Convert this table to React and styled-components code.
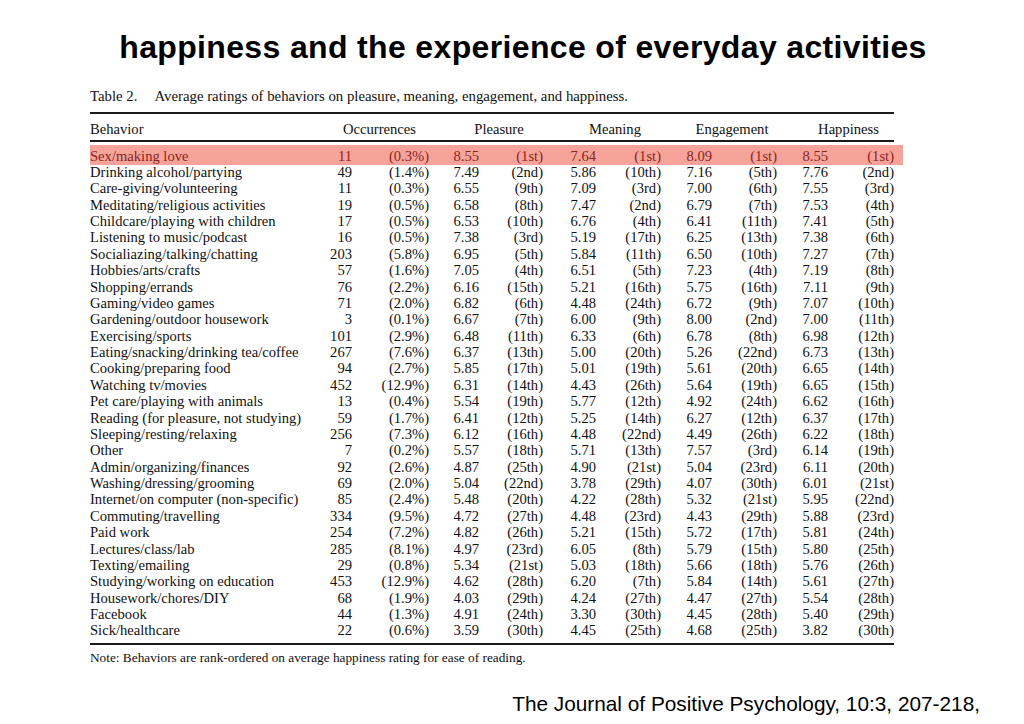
import React from 'react'
import styled, { createGlobalStyle } from 'styled-components'

const GlobalStyle = createGlobalStyle`
  html, body {
    margin: 0;
    padding: 0;
    background: #fff;
  }
  body {
    width: 1024px;
    height: 724px;
    overflow: hidden;
  }
`;

const rows = [
  ['Sex/making love', '11', '(0.3%)', '8.55', '(1st)', '7.64', '(1st)', '8.09', '(1st)', '8.55', '(1st)'],
  ['Drinking alcohol/partying', '49', '(1.4%)', '7.49', '(2nd)', '5.86', '(10th)', '7.16', '(5th)', '7.76', '(2nd)'],
  ['Care-giving/volunteering', '11', '(0.3%)', '6.55', '(9th)', '7.09', '(3rd)', '7.00', '(6th)', '7.55', '(3rd)'],
  ['Meditating/religious activities', '19', '(0.5%)', '6.58', '(8th)', '7.47', '(2nd)', '6.79', '(7th)', '7.53', '(4th)'],
  ['Childcare/playing with children', '17', '(0.5%)', '6.53', '(10th)', '6.76', '(4th)', '6.41', '(11th)', '7.41', '(5th)'],
  ['Listening to music/podcast', '16', '(0.5%)', '7.38', '(3rd)', '5.19', '(17th)', '6.25', '(13th)', '7.38', '(6th)'],
  ['Socialiazing/talking/chatting', '203', '(5.8%)', '6.95', '(5th)', '5.84', '(11th)', '6.50', '(10th)', '7.27', '(7th)'],
  ['Hobbies/arts/crafts', '57', '(1.6%)', '7.05', '(4th)', '6.51', '(5th)', '7.23', '(4th)', '7.19', '(8th)'],
  ['Shopping/errands', '76', '(2.2%)', '6.16', '(15th)', '5.21', '(16th)', '5.75', '(16th)', '7.11', '(9th)'],
  ['Gaming/video games', '71', '(2.0%)', '6.82', '(6th)', '4.48', '(24th)', '6.72', '(9th)', '7.07', '(10th)'],
  ['Gardening/outdoor housework', '3', '(0.1%)', '6.67', '(7th)', '6.00', '(9th)', '8.00', '(2nd)', '7.00', '(11th)'],
  ['Exercising/sports', '101', '(2.9%)', '6.48', '(11th)', '6.33', '(6th)', '6.78', '(8th)', '6.98', '(12th)'],
  ['Eating/snacking/drinking tea/coffee', '267', '(7.6%)', '6.37', '(13th)', '5.00', '(20th)', '5.26', '(22nd)', '6.73', '(13th)'],
  ['Cooking/preparing food', '94', '(2.7%)', '5.85', '(17th)', '5.01', '(19th)', '5.61', '(20th)', '6.65', '(14th)'],
  ['Watching tv/movies', '452', '(12.9%)', '6.31', '(14th)', '4.43', '(26th)', '5.64', '(19th)', '6.65', '(15th)'],
  ['Pet care/playing with animals', '13', '(0.4%)', '5.54', '(19th)', '5.77', '(12th)', '4.92', '(24th)', '6.62', '(16th)'],
  ['Reading (for pleasure, not studying)', '59', '(1.7%)', '6.41', '(12th)', '5.25', '(14th)', '6.27', '(12th)', '6.37', '(17th)'],
  ['Sleeping/resting/relaxing', '256', '(7.3%)', '6.12', '(16th)', '4.48', '(22nd)', '4.49', '(26th)', '6.22', '(18th)'],
  ['Other', '7', '(0.2%)', '5.57', '(18th)', '5.71', '(13th)', '7.57', '(3rd)', '6.14', '(19th)'],
  ['Admin/organizing/finances', '92', '(2.6%)', '4.87', '(25th)', '4.90', '(21st)', '5.04', '(23rd)', '6.11', '(20th)'],
  ['Washing/dressing/grooming', '69', '(2.0%)', '5.04', '(22nd)', '3.78', '(29th)', '4.07', '(30th)', '6.01', '(21st)'],
  ['Internet/on computer (non-specific)', '85', '(2.4%)', '5.48', '(20th)', '4.22', '(28th)', '5.32', '(21st)', '5.95', '(22nd)'],
  ['Commuting/travelling', '334', '(9.5%)', '4.72', '(27th)', '4.48', '(23rd)', '4.43', '(29th)', '5.88', '(23rd)'],
  ['Paid work', '254', '(7.2%)', '4.82', '(26th)', '5.21', '(15th)', '5.72', '(17th)', '5.81', '(24th)'],
  ['Lectures/class/lab', '285', '(8.1%)', '4.97', '(23rd)', '6.05', '(8th)', '5.79', '(15th)', '5.80', '(25th)'],
  ['Texting/emailing', '29', '(0.8%)', '5.34', '(21st)', '5.03', '(18th)', '5.66', '(18th)', '5.76', '(26th)'],
  ['Studying/working on education', '453', '(12.9%)', '4.62', '(28th)', '6.20', '(7th)', '5.84', '(14th)', '5.61', '(27th)'],
  ['Housework/chores/DIY', '68', '(1.9%)', '4.03', '(29th)', '4.24', '(27th)', '4.47', '(27th)', '5.54', '(28th)'],
  ['Facebook', '44', '(1.3%)', '4.91', '(24th)', '3.30', '(30th)', '4.45', '(28th)', '5.40', '(29th)'],
  ['Sick/healthcare', '22', '(0.6%)', '3.59', '(30th)', '4.45', '(25th)', '4.68', '(25th)', '3.82', '(30th)'],
];

const groups = ['Pleasure', 'Meaning', 'Engagement', 'Happiness'];

const COLS = '200px 62px 77px 50px 64px 53px 65px 51px 65px 51px 66px';

const Slide = styled.div`
  width: 1024px;
  height: 724px;
  display: flex;
  flex-direction: column;
  font-family: "Liberation Serif", "Times New Roman", serif;
  color: #111;
`;

const Title = styled.h1`
  margin: 0;
  padding: 28px 0 0 22px;
  height: 38px;
  text-align: center;
  font-family: "Liberation Sans", Arial, sans-serif;
  font-weight: bold;
  font-size: 32px;
  line-height: 38px;
  letter-spacing: 0.35px;
  color: #000;
`;

const TableBlock = styled.div`
  margin: 22px 0 0 90px;
  width: 804px;
`;

const Caption = styled.div`
  font-size: 14.8px;
  line-height: 16px;
  height: 16px;
  display: flex;
  gap: 17px;
`;

const Rule = styled.div`
  height: ${p => p.$thick}px;
  background: #1a1a1a;
  margin-top: ${p => p.$top}px;
`;

const Grid = styled.div`
  display: grid;
  grid-template-columns: ${COLS};
  font-size: 14.6px;
  line-height: 16.38px;
  height: 16.38px;
  white-space: nowrap;
`;

const HeadRow = styled(Grid)`
  margin-top: 7px;
  height: 19px;
`;

const Row = styled(Grid)`
  position: relative;
  color: ${p => (p.$hot ? '#8a241d' : '#111')};
  &::before {
    content: '';
    display: ${p => (p.$hot ? 'block' : 'none')};
    position: absolute;
    left: 0;
    right: -9px;
    top: -3px;
    bottom: -1px;
    background: #f6a39a;
    z-index: 0;
  }
`;

const Cell = styled.span`
  position: relative;
  z-index: 1;
  text-align: ${p => (p.$left ? 'left' : 'right')};
`;

const GroupHead = styled.span`
  grid-column: span 2;
  text-align: center;
  padding-left: ${p => p.$inset}px;
`;

const Body = styled.div`
  margin-top: 6px;
`;

const Note = styled.div`
  margin-top: 5px;
  font-size: 13.3px;
  line-height: 16px;
`;

const Footer = styled.div`
  margin-top: auto;
  padding: 0 44px 8px 0;
  display: flex;
  justify-content: flex-end;
  font-family: "Liberation Sans", Arial, sans-serif;
  font-size: 20.8px;
  line-height: 24px;
  color: #000;
`;

export default function App() {
  return (
    <>
      <GlobalStyle />
      <Slide>
        <Title>happiness and the experience of everyday activities</Title>
        <TableBlock>
          <Caption>
            <span>Table 2.</span>
            <span>Average ratings of behaviors on pleasure, meaning, engagement, and happiness.</span>
          </Caption>
          <Rule $thick={2} $top={8} />
          <HeadRow>
            <Cell $left>Behavior</Cell>
            <GroupHead $inset={40}>Occurrences</GroupHead>
            {groups.map(g => (
              <GroupHead key={g} $inset={26}>{g}</GroupHead>
            ))}
          </HeadRow>
          <Rule $thick={1.5} $top={0} />
          <Body>
            {rows.map((r, i) => (
              <Row key={r[0]} $hot={i === 0}>
                {r.map((v, j) => (
                  <Cell key={j} $left={j === 0}>{v}</Cell>
                ))}
              </Row>
            ))}
          </Body>
          <Rule $thick={2.5} $top={4} />
          <Note>Note: Behaviors are rank-ordered on average happiness rating for ease of reading.</Note>
        </TableBlock>
        <Footer>The Journal of Positive Psychology, 10:3, 207-218,</Footer>
      </Slide>
    </>
  )
}
